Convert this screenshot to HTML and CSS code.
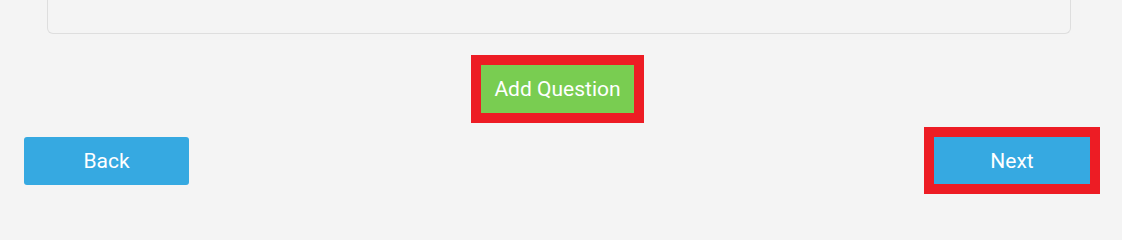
FILE: index.html
```html
<!DOCTYPE html>
<html>
<head>
<meta charset="utf-8">
<link rel="stylesheet" href="styles.css">
</head>
<body>
<div class="page">
  <div class="card"></div>
  <div class="add-row">
    <div class="highlight">
      <button class="btn btn-green btn-add">Add Question</button>
    </div>
  </div>
  <div class="nav-row">
    <button class="btn btn-blue btn-back">Back</button>
    <div class="highlight">
      <button class="btn btn-blue btn-next">Next</button>
    </div>
  </div>
</div>
</body>
</html>
```
FILE: styles.css
```css
html, body {
  margin: 0;
  padding: 0;
  background: #f4f4f4;
}
.page {
  width: 1122px;
  height: 225px;
  font-family: Roboto, "Liberation Sans", sans-serif;
}
.card {
  margin-left: 47px;
  width: 1022px;
  height: 33px;
  border: 1px solid #dedede;
  border-top: 0;
  border-radius: 0 0 6px 6px;
  background: #f4f4f4;
}
.add-row {
  display: flex;
  justify-content: center;
  padding-right: 7px;
  margin-top: 21px;
}
.highlight {
  border: 10px solid #ed1c24;
  display: flex;
}
.btn {
  border: 0;
  margin: 0;
  padding: 0;
  color: #fff;
  font-family: Roboto, "Liberation Sans", sans-serif;
  font-size: 21px;
  display: flex;
  align-items: center;
  justify-content: center;
}
.btn-green {
  background: #79cd51;
}
.btn-blue {
  background: #36a9e1;
}
.btn-add {
  width: 153px;
  height: 48px;
}
.nav-row {
  display: flex;
  justify-content: space-between;
  align-items: center;
  padding: 0 22px 0 24px;
  margin-top: 4px;
}
.btn-back {
  width: 165px;
  height: 48px;
  border-radius: 3px;
}
.btn-next {
  width: 156px;
  height: 47px;
}
```
